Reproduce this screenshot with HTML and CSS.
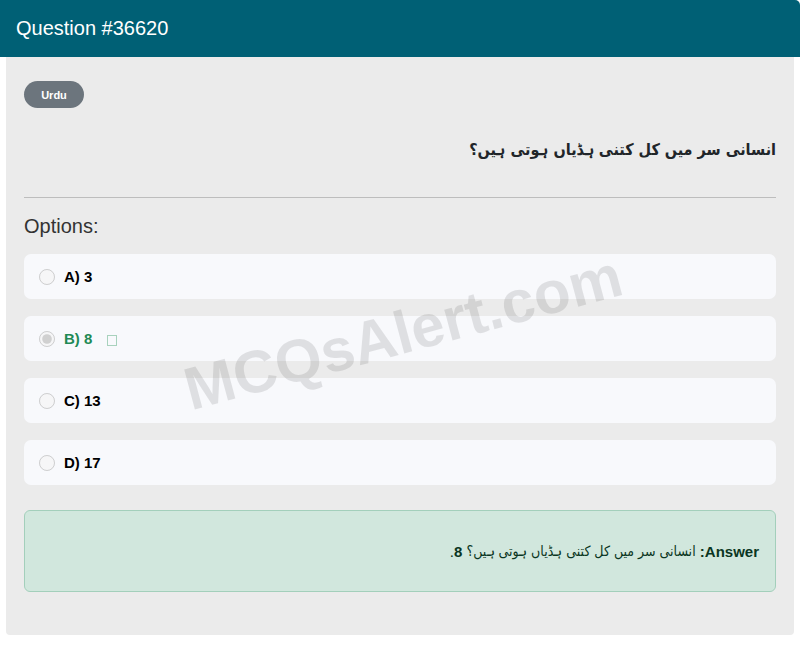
FILE: index.html
```html
<!DOCTYPE html>
<html lang="en">
<head>
<meta charset="utf-8">
<title>Question #36620</title>
<link rel="stylesheet" href="styles.css">
</head>
<body>
<div class="card">
  <div class="card-header">Question #36620</div>
  <div class="card-body">
    <span class="badge">Urdu</span>
    <h2 class="question" dir="rtl">انسانی سر میں کل کتنی ہڈیاں ہوتی ہیں؟</h2>
    <hr class="divider">
    <div class="options-title">Options:</div>
    <div class="options">
      <label class="option"><input type="radio" name="opt" disabled><span class="opt-text">A) 3</span></label>
      <label class="option correct"><input type="radio" name="opt" disabled checked><span class="opt-text">B) 8</span><span class="tofu"></span></label>
      <label class="option"><input type="radio" name="opt" disabled><span class="opt-text">C) 13</span></label>
      <label class="option"><input type="radio" name="opt" disabled><span class="opt-text">D) 17</span></label>
    </div>
    <div class="answer" dir="rtl"><strong>Answer:</strong>&nbsp;<span class="urdu">انسانی سر میں کل کتنی ہڈیاں ہوتی ہیں؟</span>&nbsp;<strong>8</strong>.</div>
    <div class="watermark">MCQsAlert.com</div>
  </div>
</div>
</body>
</html>
```

FILE: styles.css
```css
* { box-sizing: border-box; }
html, body { margin: 0; padding: 0; background: #ffffff; }
body { font-family: "Liberation Sans", Arial, sans-serif; color: #212529; }

.card { width: 800px; }

.card-header {
  background: #006075;
  color: #ffffff;
  height: 57px;
  padding: 0 16px;
  display: flex;
  align-items: center;
  font-size: 20px;
  border-radius: 0 5px 0 0;
}

.card-body {
  position: relative;
  overflow: hidden;
  margin: 0 6px;
  background: #ebebeb;
  padding: 24px 18px 43px;
  border-radius: 0 0 4px 4px;
}

.badge {
  display: inline-flex;
  align-items: center;
  justify-content: center;
  height: 27px;
  width: 60px;
  border-radius: 14px;
  background: #6c757d;
  color: #ffffff;
  font-size: 11px;
  font-weight: bold;
}

.question {
  margin: 27px 0 0;
  font-family: "DejaVu Sans Condensed", "DejaVu Sans", sans-serif;
  font-size: 16px;
  font-weight: bold;
  line-height: 30px;
  text-align: right;
  color: #212529;
}

.divider {
  margin: 32px 0 0;
  border: 0;
  border-top: 1px solid #bdbdbd;
}

.options-title {
  margin-top: 16px;
  font-size: 20px;
  line-height: 24px;
  color: #333333;
}

.options {
  margin-top: 16px;
  display: flex;
  flex-direction: column;
  gap: 17px;
}

.option {
  display: flex;
  align-items: center;
  height: 45px;
  padding: 0 14px;
  background: #f8f9fc;
  border-radius: 7px;
  font-size: 15px;
  font-weight: bold;
  color: #000000;
}

.option input {
  width: 16px;
  height: 16px;
  margin: 0 9px 0 1px;
}

.option.correct { color: #1f8a55; }

.tofu {
  display: inline-block;
  width: 10px;
  height: 11px;
  margin-left: 15px;
  margin-top: 4px;
  border: 1px solid #a8d2bd;
}

.answer {
  margin-top: 25px;
  height: 82px;
  display: flex;
  align-items: center;
  padding: 0 16px;
  background: #d1e7dd;
  border: 1px solid #a3cfbb;
  border-radius: 6px;
  color: #0a3622;
  font-size: 15px;
  direction: rtl;
}
.answer .urdu {
  font-family: "DejaVu Sans Condensed", "DejaVu Sans", sans-serif;
  font-size: 14px;
}

.watermark {
  position: absolute;
  left: 172px;
  top: 241px;
  font-family: "Liberation Sans", Arial, sans-serif;
  font-size: 60px;
  font-weight: bold;
  color: rgba(0, 0, 0, 0.1);
  transform: rotate(-15deg);
  transform-origin: center;
  white-space: nowrap;
  pointer-events: none;
}
```
